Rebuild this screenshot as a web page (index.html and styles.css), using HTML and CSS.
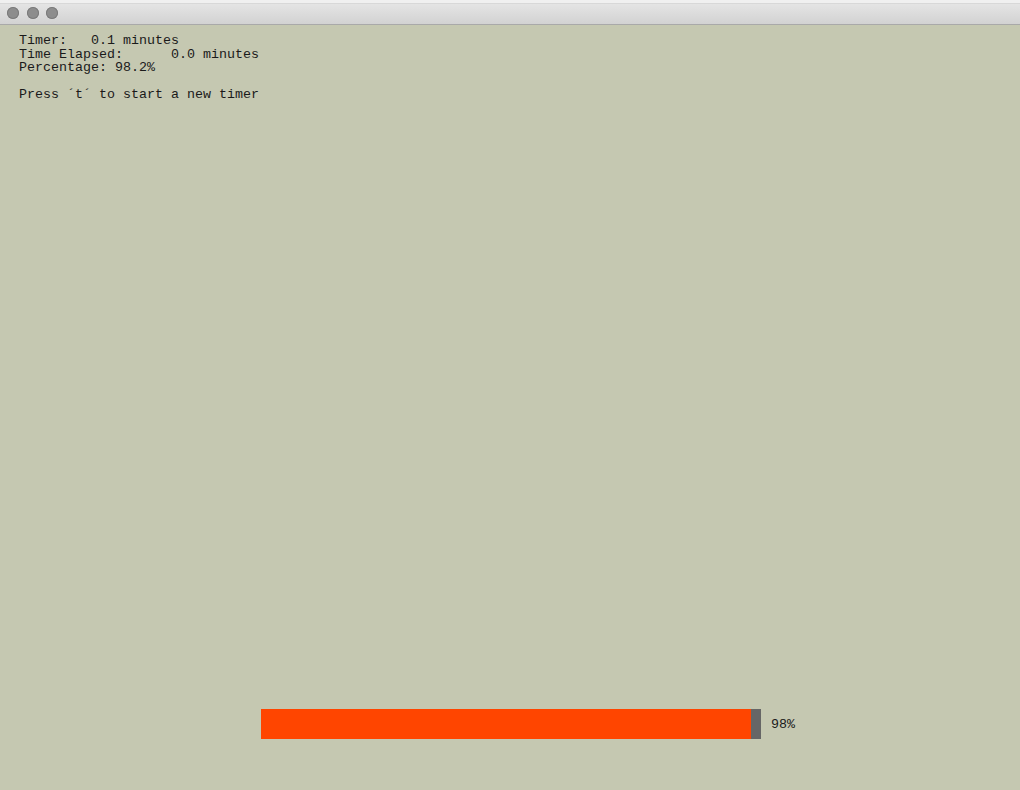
FILE: index.html
```html
<!DOCTYPE html>
<html>
<head>
<meta charset="utf-8">
<link rel="stylesheet" href="styles.css">
</head>
<body>
<div class="window">
  <div class="titlebar">
    <div class="topstrip"></div>
    <div class="lights">
      <span class="light"></span>
      <span class="light"></span>
      <span class="light"></span>
    </div>
  </div>
  <div class="canvas">
    <pre class="info">Timer:   0.1 minutes
Time Elapsed:      0.0 minutes
Percentage: 98.2%

Press ´t´ to start a new timer</pre>
    <div class="progress">
      <div class="track">
        <div class="fill" style="width: 490px"></div>
        <div class="rest"></div>
      </div>
      <span class="label">98%</span>
    </div>
  </div>
</div>
</body>
</html>
```

FILE: styles.css
```css
html, body {
  margin: 0;
  padding: 0;
  width: 1020px;
  height: 790px;
  overflow: hidden;
  background: #c5c8b1;
}
.window {
  display: flex;
  flex-direction: column;
  height: 790px;
}
.titlebar {
  height: 24px;
  flex: none;
  position: relative;
  background: linear-gradient(#e8e8e8, #d2d2d2);
  border-bottom: 1px solid #a9a9a9;
}
.topstrip {
  position: absolute;
  left: 0;
  right: 0;
  top: 0;
  height: 3px;
  background: #f0f0f0;
  border-bottom: 1px solid #d8d8d8;
}
.lights {
  display: flex;
  gap: 7.5px;
  padding: 7px 0 0 7px;
  position: relative;
}
.light {
  width: 12px;
  height: 12px;
  border-radius: 50%;
  background: #8d8d8d;
  box-shadow: inset 0 0 0 1px #7b7b7b;
}
.canvas {
  flex: 1;
  display: flex;
  flex-direction: column;
  justify-content: space-between;
  padding: 9px 0 51px 19px;
  background: #c5c8b1;
}
.info {
  margin: 0;
  font-family: "Liberation Mono", "DejaVu Sans Mono", monospace;
  font-size: 13.33px;
  line-height: 13.5px;
  color: #1a1a1a;
}
.progress {
  display: flex;
  align-items: center;
  gap: 10px;
  padding-left: 242px;
}
.track {
  display: flex;
  width: 500px;
  height: 30px;
}
.fill {
  background: #ff4500;
  height: 100%;
}
.rest {
  flex: 1;
  background: #666666;
}
.label {
  font-family: "Liberation Mono", "DejaVu Sans Mono", monospace;
  font-size: 13.33px;
  color: #1a1a1a;
}
```
